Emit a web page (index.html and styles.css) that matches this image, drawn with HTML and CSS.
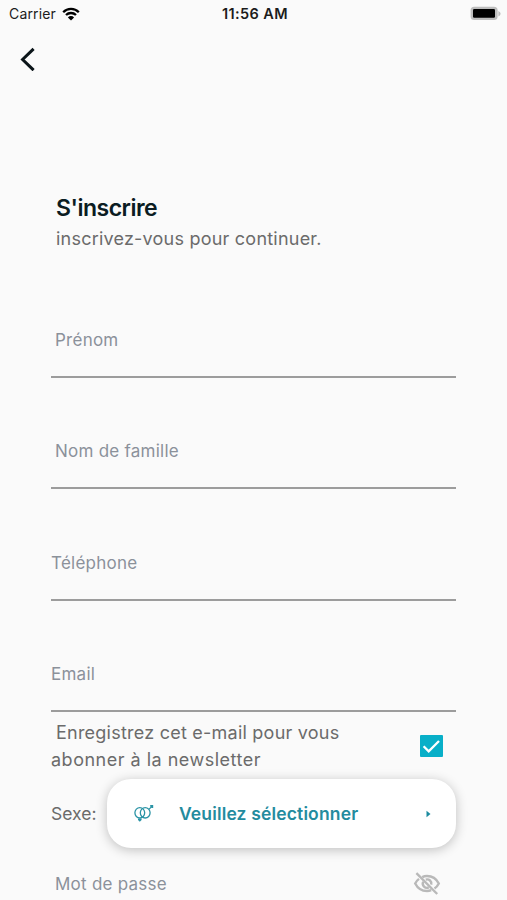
FILE: index.html
```
<!DOCTYPE html>
<html lang="fr">
<head>
    <meta charset="UTF-8">
    <meta name="viewport" content="width=device-width, initial-scale=1.0">
    <title>S'inscrire</title>
    <link rel="stylesheet" href="styles.css">
</head>
<body>

    <div class="status-bar">
        <div class="carrier">
            <span>Carrier</span>
            <svg class="wifi" viewBox="0 0 18 14">
                <path d="M1.2 5.2a11 11 0 0 1 15.6 0M4 8a7.2 7.2 0 0 1 10 0" fill="none" stroke="#000" stroke-width="2.3"/>
                <path d="M9 13.5L5.9 10.4a4.4 4.4 0 0 1 6.2 0z"/>
            </svg>
        </div>
        <span class="time">11:56 AM</span>
        <svg class="battery" viewBox="0 0 31 15">
            <rect x=".6" y=".7" width="27" height="13.4" rx="3.6" fill="#bdbdbd"/>
            <path d="M28.4 5v5.4q2.2-1 2.2-2.7T28.4 5z" fill="#bdbdbd"/>
            <rect x="3" y="3" width="22" height="8.8" rx="1.2"/>
        </svg>
    </div>

    <div class="navbar">
        <a href="#" class="back">
            <svg viewBox="0 0 16 24">
                <path d="M13.6 1.8L2.6 12.5l11 10.7" fill="none" stroke="#0b1519" stroke-width="3"/>
            </svg>
        </a>
    </div>

    <div class="content">
        <div class="heading">
            <h1>S'inscrire</h1>
            <p>inscrivez-vous pour continuer.</p>
        </div>

        <form>
            <div class="field indent"><input type="text" class="prenom" placeholder="Prénom"></div>
            <div class="field indent"><input type="text" class="nom" placeholder="Nom de famille"></div>
            <div class="field"><input type="tel" class="telephone" placeholder="Téléphone"></div>
            <div class="field"><input type="email" class="email" placeholder="Email"></div>

            <div class="newsletter">
                <p><span class="first-line">Enregistrez cet e-mail pour vous</span><br><span class="second-line">abonner à la newsletter</span></p>
                <span class="checkbox">
                    <svg viewBox="0 0 22 22">
                        <path d="M3.6 11.3l5.1 5.1L19 6" fill="none" stroke="#fff" stroke-width="2.3"/>
                    </svg>
                </span>
            </div>

            <div class="gender">
                <span class="gender-label">Sexe:</span>
                <button type="button" class="select">
                    <svg class="gender-icon" viewBox="0 0 20 17">
                        <g fill="none" stroke="#2a93a5" stroke-width="1.3">
                            <ellipse cx="5.8" cy="7.8" rx="4.9" ry="5.2"/>
                            <ellipse cx="11.2" cy="7.8" rx="4.9" ry="5.2"/>
                            <path d="M14.8 4.4L18 1.4"/>
                        </g>
                        <path d="M16.2 0h3v3h-1.4l-1.6-1.6zM4 13.4h3.6v1.6l-1.8 1.8L4 15z" fill="#2a93a5"/>
                    </svg>
                    <span class="select-text">Veuillez sélectionner</span>
                    <svg class="arrow" viewBox="0 0 5 8"><path d="M.5.7v6.6L4.5 4z" fill="#1c8b9f"/></svg>
                </button>
            </div>

            <div class="password indent">
                <input type="password" class="mdp" placeholder="Mot de passe">
                <svg class="eye" viewBox="0 0 28 24">
                    <g fill="none" stroke="#b9b9b9" stroke-width="2.4">
                        <path d="M9.2 5.1Q11.4 4 14 4q8 0 11.8 7.5-1.6 3.2-4.3 5.1M18.2 18.2Q16.3 19 14 19 6 19 2.2 11.5 3.6 8.7 6 6.9"/>
                        <path d="M12.8 7.6a4.2 4.2 0 0 1 5.4 5M15.8 15.4a4.2 4.2 0 0 1-5.6-5.6"/>
                        <path d="M3.4 1.2L24.2 22"/>
                    </g>
                </svg>
            </div>
        </form>
    </div>

</body>
</html>
```
FILE: styles.css
```
* {
    margin: 0;
    padding: 0;
    box-sizing: border-box;
}

body {
    height: 900px;
    overflow: hidden;
    font-family: Inter, "Liberation Sans", sans-serif;
    background-color: #fafafa;
    color: #6b6b6b;
}

.status-bar {
    display: grid;
    grid-template-columns: 1fr auto 1fr;
    align-items: center;
    height: 27px;
    padding: 0 6px 0 9px;
    color: #1c1c1c;
    font-size: 14px;
}

.carrier {
    display: flex;
    align-items: center;
    gap: 6px;
    letter-spacing: 0.15px;
}

.wifi {
    width: 18px;
    height: 14px;
}

.time {
    font-size: 14.5px;
    font-weight: 600;
    letter-spacing: 0.4px;
}

.battery {
    width: 31px;
    height: 15px;
    justify-self: end;
}

.navbar {
    height: 63px;
    padding: 20px;
}

.back svg {
    display: block;
    width: 16px;
    height: 24px;
}

.content {
    padding: 102px 51px 0;
}

.heading {
    height: 74.5px;
    padding-left: 5px;
}

.heading h1 {
    color: #0b1c22;
    font-size: 23px;
    font-weight: 600;
    line-height: 32px;
    letter-spacing: -0.5px;
}

.heading p {
    font-size: 18px;
    line-height: 30px;
    letter-spacing: 0.22px;
}

.field {
    height: 111.4px;
    padding-top: 58.5px;
    border-bottom: 2px solid #9c9c9c;
}

input {
    display: block;
    width: 100%;
    height: 30px;
    border: none;
    outline: none;
    background: none;
    font-family: inherit;
    font-size: 17px;
    letter-spacing: 0.25px;
}

input::placeholder {
    color: #8b919a;
    opacity: 1;
}

.indent input {
    padding-left: 4px;
}

.newsletter {
    display: flex;
    align-items: center;
    justify-content: space-between;
    height: 67px;
    padding-right: 13px;
}

.newsletter p {
    font-size: 18px;
    line-height: 27px;
    letter-spacing: 0.23px;
}

.first-line {
    padding-left: 5px;
}

.second-line {
    letter-spacing: 0.5px;
}

.checkbox {
    width: 23px;
    height: 22px;
    border-radius: 1px;
    background-color: #08afc8;
}

.checkbox svg {
    display: block;
    height: 22px;
}

.gender {
    display: flex;
    align-items: center;
    height: 69px;
}

.gender-label {
    width: 56px;
    font-size: 17.5px;
}

.select {
    display: flex;
    flex: 1;
    align-items: center;
    height: 69px;
    padding: 0 25px 0 27px;
    border: none;
    border-radius: 24px;
    background-color: #fff;
    box-shadow: 0 2px 12px rgba(0, 0, 0, 0.24);
    font-family: inherit;
}

.gender-icon {
    width: 20px;
    height: 17px;
}

.select-text {
    margin-left: 25px;
    color: #248b9e;
    font-size: 17.5px;
    font-weight: 600;
    letter-spacing: 0.15px;
}

.arrow {
    width: 5px;
    height: 8px;
    margin-left: auto;
}

.password {
    display: flex;
    align-items: center;
    height: 72px;
    padding-right: 15px;
}

.eye {
    flex: none;
    width: 28px;
    height: 24px;
}
```
